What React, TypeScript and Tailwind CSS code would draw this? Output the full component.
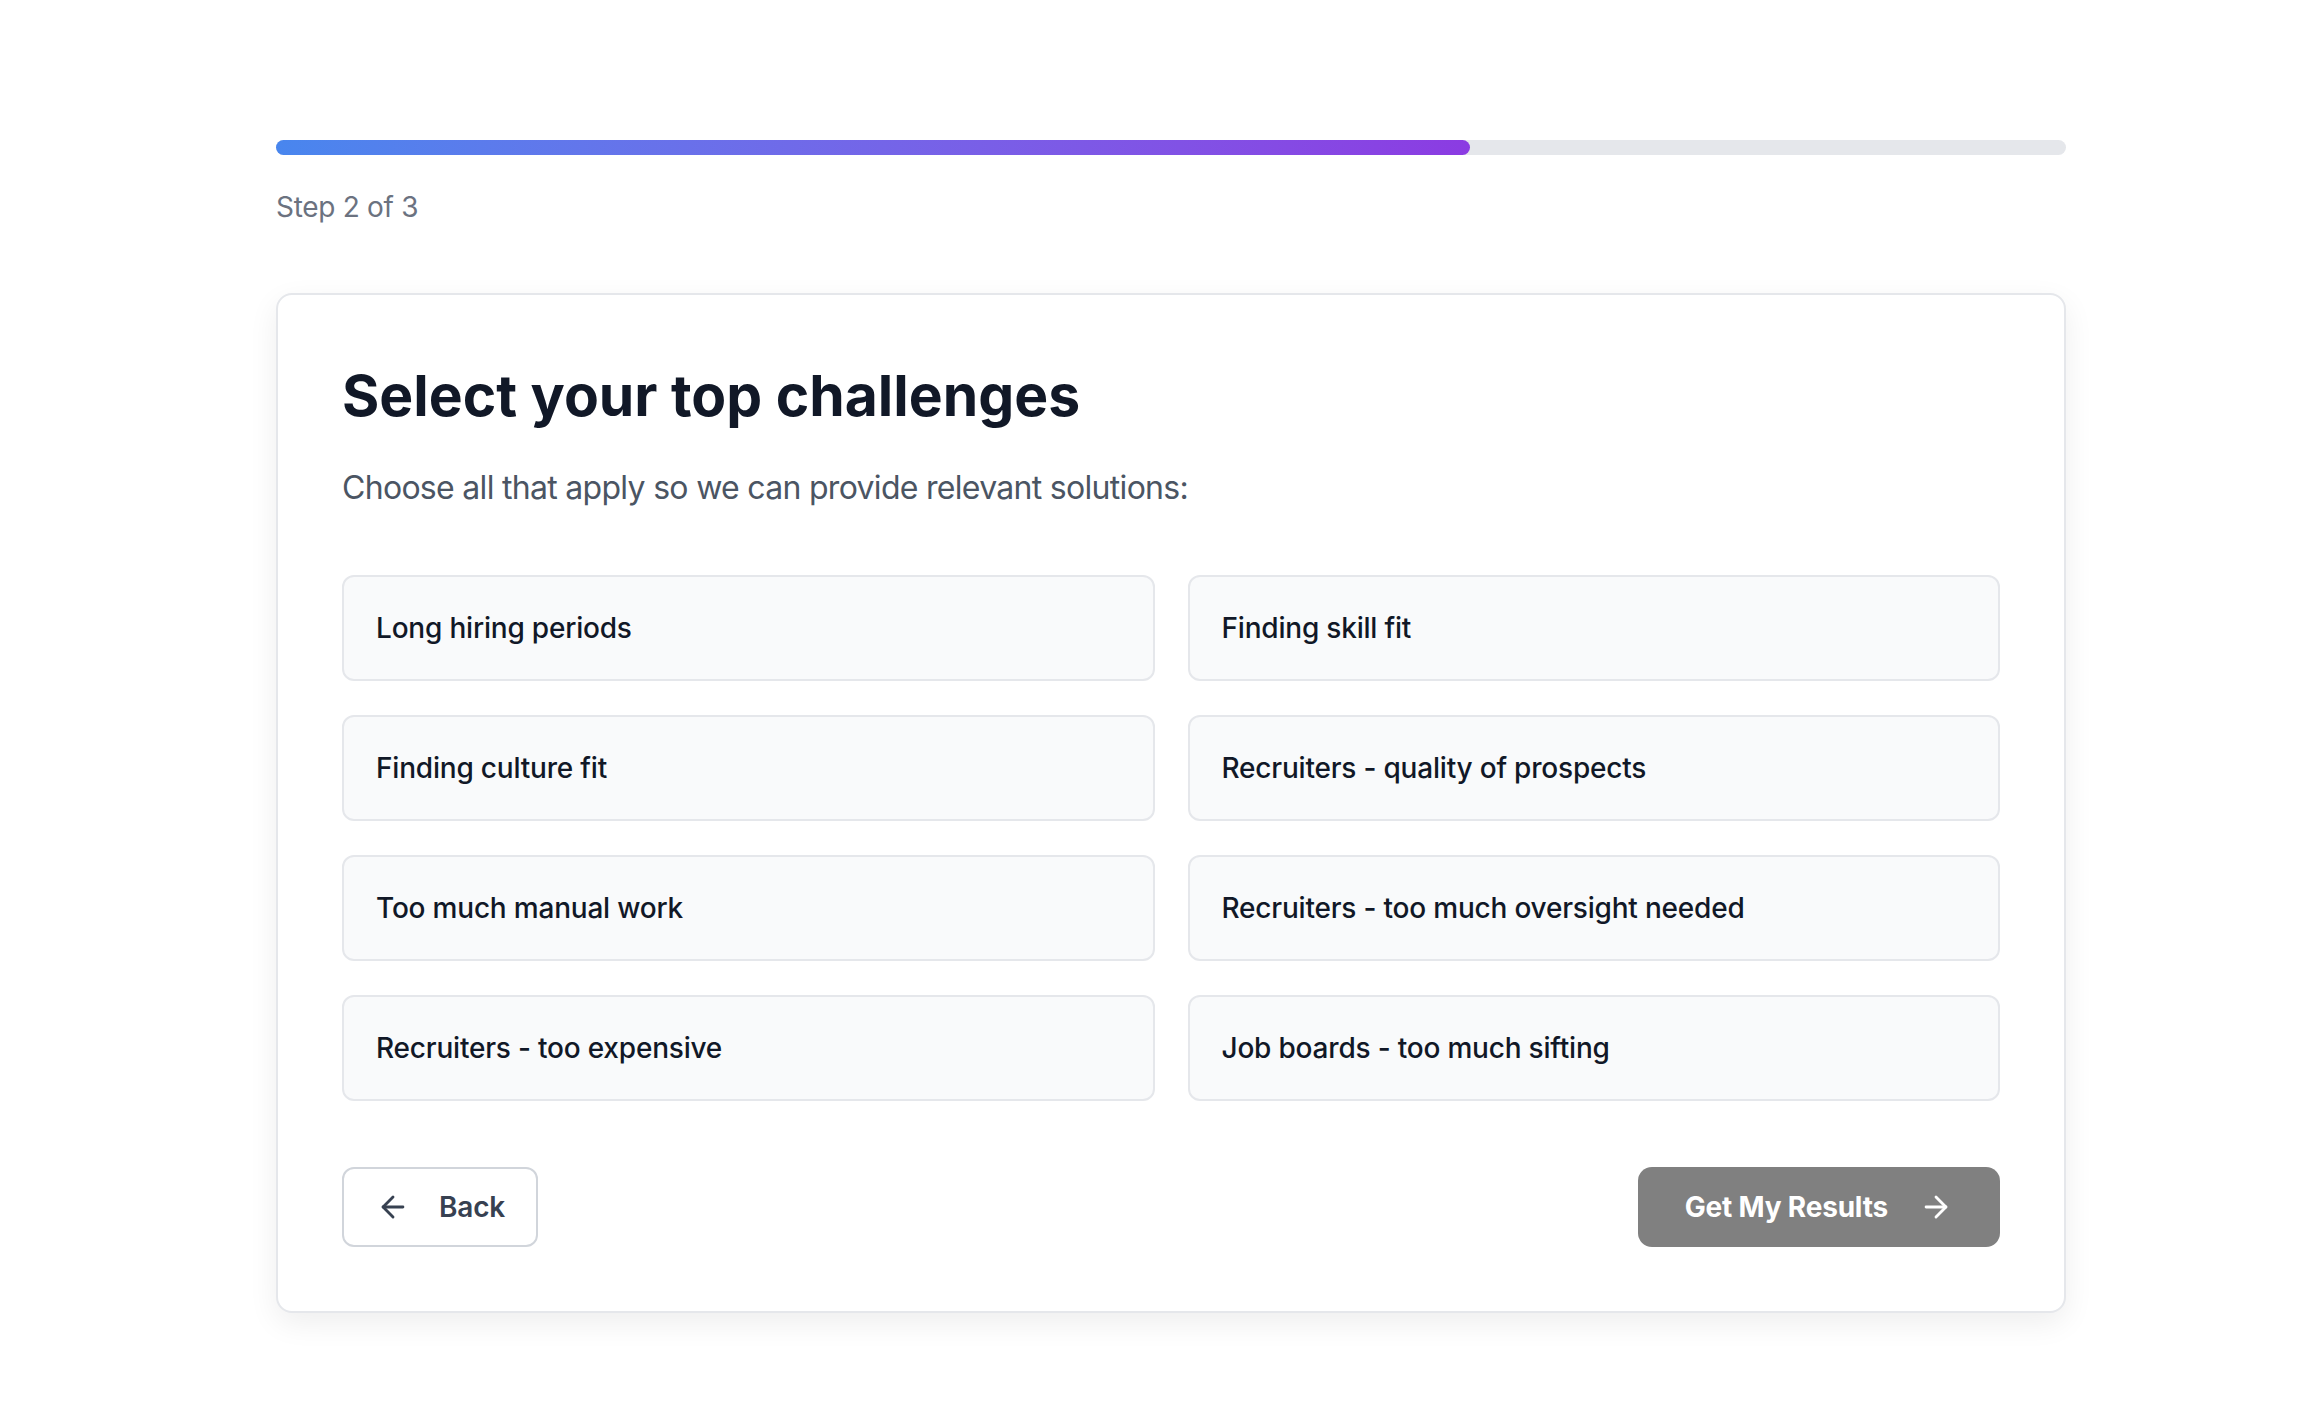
import React from "react";
import { ArrowLeft, ArrowRight } from "lucide-react";

const options = [
  "Long hiring periods",
  "Finding skill fit",
  "Finding culture fit",
  "Recruiters - quality of prospects",
  "Too much manual work",
  "Recruiters - too much oversight needed",
  "Recruiters - too expensive",
  "Job boards - too much sifting",
];

export default function App() {
  return (
    <div
      className="min-h-screen bg-white pt-[140px] pb-[100px]"
      style={{ fontFamily: "Inter, 'Noto Sans', sans-serif" }}
    >
      <div className="ml-[276px] w-[1790px]">
        <div className="h-[15px] w-full rounded-full bg-[#e5e7eb]">
          <div className="h-full w-[66.7%] rounded-full bg-gradient-to-r from-[#4886ee] to-[#8b3be2]" />
        </div>
        <div className="mt-[32px] text-[28px] leading-[40px] tracking-[-0.3px] text-[#6b7280]">Step 2 of 3</div>

        <div className="mt-[66px] rounded-[16px] border-2 border-[#e5e7eb] bg-white p-16 shadow-[0_10px_30px_rgba(0,0,0,0.07)]">
          <h1 className="text-[57px] font-bold leading-[74px] text-[#111827]">
            Select your top challenges
          </h1>
          <p className="mt-[31px] text-[32px] leading-[48px] tracking-[-0.7px] text-[#4b5563]">
            Choose all that apply so we can provide relevant solutions:
          </p>

          <div className="mt-[63px] grid grid-cols-2 gap-x-[33px] gap-y-[34px]">
            {options.map((o) => (
              <div
                key={o}
                className="flex h-[106px] items-center rounded-[12px] border-2 border-[#e5e7eb] bg-[#f9fafb] px-8 text-[28px] font-medium tracking-[-0.2px] text-[#111827]"
              >
                {o}
              </div>
            ))}
          </div>

          <div className="mt-[66px] flex items-center justify-between">
            <button className="flex h-[80px] items-center gap-[29px] rounded-[12px] border-2 border-[#d1d5db] bg-white pl-8 pr-[31px] text-[28px] font-semibold tracking-[-0.2px] text-[#374151]">
              <ArrowLeft size={34} strokeWidth={2} />
              <span>Back</span>
            </button>
            <button className="flex h-[80px] items-center gap-[31px] rounded-[14px] bg-[#808080] px-[47px] text-[28px] font-bold tracking-[-0.2px] text-white">
              <span>Get My Results</span>
              <ArrowRight size={34} strokeWidth={2} />
            </button>
          </div>
        </div>
      </div>
    </div>
  );
}
